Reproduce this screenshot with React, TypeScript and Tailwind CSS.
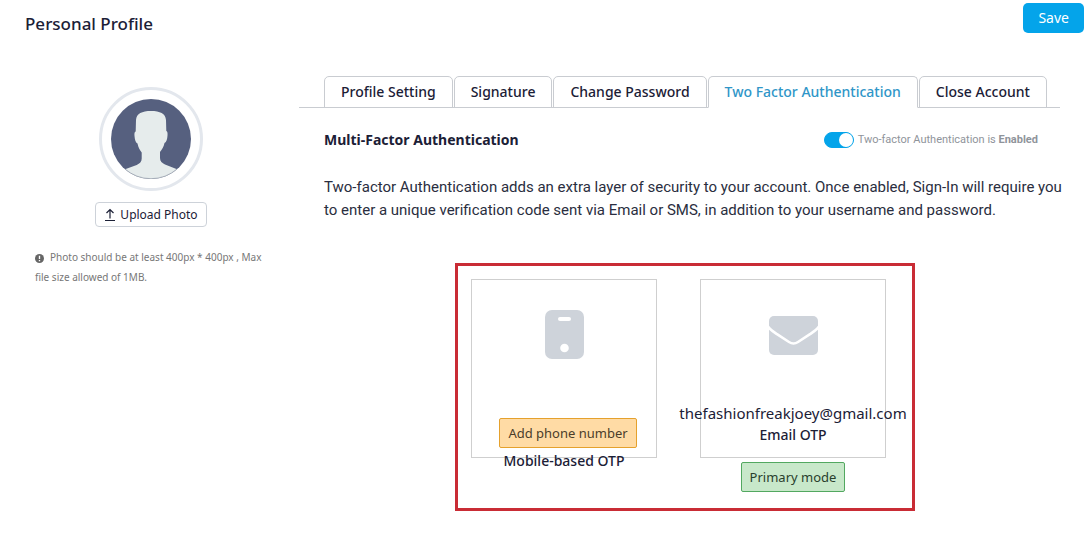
import { useState } from 'react'

const tabs = [
  'Profile Setting',
  'Signature',
  'Change Password',
  'Two Factor Authentication',
  'Close Account',
]

function Avatar() {
  return (
    <div className="rounded-full border-3 border-[#e3e7ed] p-[9px]">
      <svg viewBox="0 0 80 80" className="w-20 h-20" role="img" aria-label="Profile photo">
        <defs>
          <clipPath id="avatar">
            <circle cx="40" cy="40" r="40" />
          </clipPath>
        </defs>
        <circle cx="40" cy="40" r="40" fill="#56607f" />
        <path
          clipPath="url(#avatar)"
          fill="#e6ecec"
          d="M40 12c-9 0-14.500 2.500-15 9l-.3 11.500c-1.300.5-1.400 2-1.200 4.500.3 3.500 1 6.500 3 7.500.8 4 2.200 6.500 4.200 9v6c0 3.500-2 5-5 6.500L12 71v9h56v-9l-14-5.500c-3-1.500-5-3-5-6.500v-6c2-2.500 3.700-5 4.500-9 2-1 2.800-4 3-7.500.2-2.500 0-4-1.200-4.500L55 21c-.5-6.500-6-9-15-9z"
        />
        <path d="M14 70a39.700 39.700 0 0 0 52 0" fill="none" stroke="#8b93a3" strokeWidth="0.600" />
      </svg>
    </div>
  )
}

function PhoneIcon() {
  return (
    <svg viewBox="0 0 39 49" className="w-[39px] h-[49px] shrink-0" fill="#ced3da" aria-hidden="true">
      <rect width="39" height="49" rx="7" />
      <rect x="13" y="7" width="13" height="4" rx="2" fill="#fff" />
      <circle cx="19.500" cy="38" r="4.300" fill="#fff" />
    </svg>
  )
}

function MailIcon() {
  return (
    <svg viewBox="0 0 49 39" className="w-[49px] h-[39px] shrink-0" aria-hidden="true">
      <rect width="49" height="39" rx="5" fill="#ced3da" />
      <path
        d="M-1 10.500C1 13.500 4 15.500 8 18.200L20 26C23 28 26 28 29 26L41 18.200C45 15.500 48 13.500 50 10.500"
        fill="none"
        stroke="#fff"
        strokeWidth="2.600"
      />
    </svg>
  )
}

export default function App() {
  const [active, setActive] = useState('Two Factor Authentication')
  const [enabled, setEnabled] = useState(true)

  return (
    <div className="min-h-screen bg-white text-[#1b2036] font-['Noto_Sans',sans-serif]">
      {/* Header */}
      <header className="flex items-start justify-between pl-[25px] pr-2 pt-[3px]">
        <h1 className="pt-[9px] text-[17px] leading-6 font-medium">Personal Profile</h1>
        <button className="rounded-[5px] bg-[#04a4ea] px-[15px] text-[14px] leading-[30px] text-white">
          Save
        </button>
      </header>

      <div className="flex pt-10 pr-7">
        {/* Photo */}
        <aside className="w-[299px] shrink-0 pt-[11px] pl-[35px] pr-8">
          <div className="flex flex-col items-center gap-[11px]">
            <Avatar />
            <button className="flex items-center gap-1 rounded border border-[#cdd2d9] px-2 text-[12px] leading-[23px]">
              <svg
                viewBox="0 0 12 14"
                className="w-3 h-[14px]"
                fill="none"
                stroke="currentColor"
                strokeWidth="1.200"
                aria-hidden="true"
              >
                <path d="M6 10.500V1.500M2.500 5L6 1.500 9.500 5M1 12.500h10" />
              </svg>
              Upload Photo
            </button>
          </div>
          <p className="pt-5 text-[10px] leading-5 text-[#777]">
            <svg viewBox="0 0 10 10" className="mr-[6px] inline w-[9px] h-[9px]" aria-hidden="true">
              <circle cx="5" cy="5" r="5" fill="#666" />
              <path d="M5 2v3.500M5 6.700v1.400" stroke="#fff" strokeWidth="1.500" />
            </svg>
            Photo should be at least 400px * 400px , Max file size allowed of 1MB.
          </p>
        </aside>

        <main className="min-w-0 grow">
          {/* Tabs */}
          <nav className="mr-1 flex gap-px border-b border-[#c9ccd1] pl-[25px]">
            {tabs.map((tab) => (
              <button
                key={tab}
                onClick={() => setActive(tab)}
                className={`-mb-px rounded-t-[5px] border px-4 text-[14px] leading-[30px] font-medium whitespace-nowrap ${
                  tab === active
                    ? 'border-[#c9ccd1] border-b-white bg-white text-[#2f96c8]'
                    : 'border-[#c9ccd1]'
                }`}
              >
                {tab}
              </button>
            ))}
          </nav>

          <div className="pl-[25px]">
            <div className="flex items-center justify-between pt-5 pr-[26px]">
              <h2 className="text-[14px] leading-6 font-bold">Multi-Factor Authentication</h2>
              <label className="flex items-center gap-1 font-[Roboto,sans-serif] text-[11px] text-[#8f949b]">
                <input
                  type="checkbox"
                  checked={enabled}
                  onChange={() => setEnabled(!enabled)}
                  className="peer sr-only"
                />
                <span
                  className={`flex h-4 w-[30px] rounded-full border ${
                    enabled ? 'justify-end border-[#04a4ea] bg-[#04a4ea]' : 'border-gray-400 bg-gray-400'
                  }`}
                >
                  <span className="h-[14px] w-[14px] rounded-full bg-white" />
                </span>
                <span>
                  Two-factor Authentication is <b>{enabled ? 'Enabled' : 'Disabled'}</b>
                </span>
              </label>
            </div>

            <p className="pt-6 font-[Roboto,sans-serif] text-[15px] leading-[23px] text-[#2a2e40]">
              Two-factor Authentication adds an extra layer of security to your account. Once
              enabled, Sign-In will require you to enter a unique verification code sent via Email
              or SMS, in addition to your username and password.
            </p>
          </div>

          {/* OTP modes */}
          <div className="flex justify-center pt-[41px] pl-[7px]">
            <section className="flex gap-[43px] border-3 border-[#c92c35] pt-[13px] pr-[26px] pb-[50px] pl-[13px]">
              <div className="flex h-[179px] w-[186px] flex-col items-center border border-[#cfcfcf] pt-[30px]">
                <PhoneIcon />
                <button className="mt-[59px] ml-2 shrink-0 rounded-xs border border-[#e5a12d] bg-[#ffdba5] px-2 text-[13px] leading-7 text-[#4b3d2a]">
                  Add phone number
                </button>
                <span className="pt-[2px] text-[14px] leading-[22px] font-medium">
                  Mobile-based OTP
                </span>
              </div>
              <div className="flex h-[179px] w-[186px] flex-col items-center border border-[#cfcfcf] pt-9">
                <MailIcon />
                <span className="mt-12 text-[15px] leading-[21px]">
                  thefashionfreakjoey@gmail.com
                </span>
                <span className="text-[14px] leading-[21px] font-medium">Email OTP</span>
                <button className="mt-[17px] shrink-0 rounded-xs border border-[#52a860] bg-[#c8e8ca] px-2 text-[13px] leading-7 text-[#29402d]">
                  Primary mode
                </button>
              </div>
            </section>
          </div>
        </main>
      </div>
    </div>
  )
}
